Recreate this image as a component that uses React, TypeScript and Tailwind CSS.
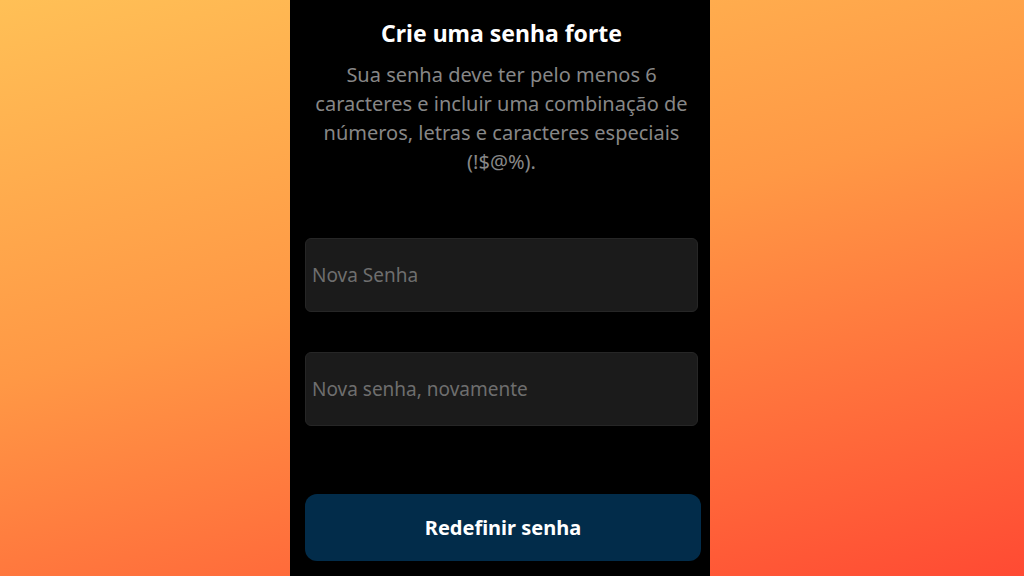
export default function App() {
  return (
    <div className="flex h-[576px] w-[1024px] justify-center overflow-hidden bg-[linear-gradient(165deg,#ffc056_0%,#ff9845_45%,#ff4a33_100%)] pr-[24px] font-['Noto_Sans',sans-serif]">
      <div className="flex h-full w-[420px] flex-col bg-black pl-[15px] pr-[12px]">
        <h1 className="mt-[19px] text-center text-[23px] font-bold leading-[28px] text-white">
          Crie uma senha forte
        </h1>
        <p className="mx-auto mt-[13px] max-w-[385px] text-center text-[20px] leading-[29px] text-[#878787]">
          Sua senha deve ter pelo menos 6 caracteres e incluir uma combinação de números, letras e caracteres especiais (!$@%).
        </p>
        <input
          type="password"
          placeholder="Nova Senha"
          className="mt-[62px] h-[74px] w-full rounded-[6px] border border-[#262626] bg-[#1b1b1b] px-[6px] text-[19px] text-white placeholder:text-[#6e6e6e] outline-none"
        />
        <input
          type="password"
          placeholder="Nova senha, novamente"
          className="mt-[40px] h-[74px] w-full rounded-[6px] border border-[#262626] bg-[#1b1b1b] px-[6px] text-[19px] text-white placeholder:text-[#6e6e6e] outline-none"
        />
        <button className="mt-[68px] mr-[-3px] h-[67px] rounded-[12px] bg-[#022c4a] text-[20px] font-bold text-white">
          Redefinir senha
        </button>
      </div>
    </div>
  );
}
